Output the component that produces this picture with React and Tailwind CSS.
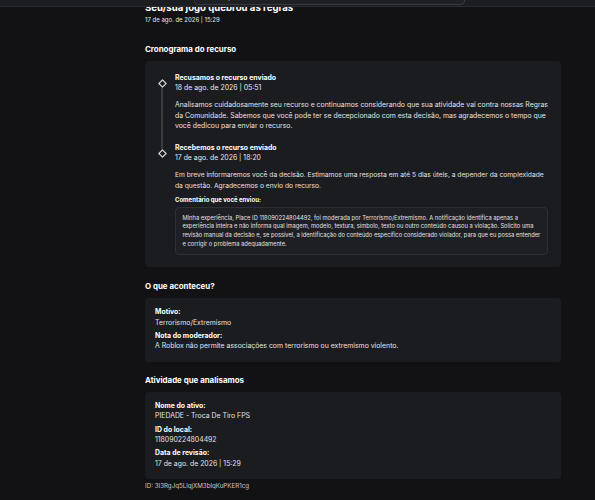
import React from "react";

const Diamond = () => (
  <svg width="9" height="9" viewBox="0 0 9 9" className="shrink-0">
    <path d="M4.5 0.9 L8.1 4.5 L4.5 8.1 L0.9 4.5 Z" fill="none" stroke="#d6d6d8" strokeWidth="1.2" strokeLinejoin="round" />
  </svg>
);

const TimelineItem = ({ title, date, first, last, children }) => (
  <div className="flex flex-col">
    <div className="flex gap-[8px]">
      <div className="flex w-[10px] flex-col items-center">
        <div className={`w-[1.5px] flex-1 ${first ? "" : "bg-[#3b3c41]"}`} />
        <Diamond />
        <div className={`w-[1.5px] flex-1 ${last ? "" : "bg-[#3b3c41]"}`} />
      </div>
      <div className="flex flex-col">
        <div className="text-[6.9px] font-bold leading-[10.5px] text-white">{title}</div>
        <div className="text-[6.9px] leading-[10.5px] text-[#e8e8ea]">{date}</div>
      </div>
    </div>
    <div className="flex gap-[8px]">
      <div className="flex w-[10px] justify-center">
        <div className={`w-[1.5px] ${last ? "" : "bg-[#3b3c41]"}`} />
      </div>
      <div className={`flex-1 pt-[6.5px] ${last ? "" : "pb-[11px]"}`}>{children}</div>
    </div>
  </div>
);

const Field = ({ label, value }) => (
  <div className="flex flex-col">
    <div className="text-[6.9px] font-bold leading-[10.5px] text-white">{label}</div>
    <div className="text-[6.9px] leading-[10.5px] text-[#e2e2e4]">{value}</div>
  </div>
);

export default function App() {
  return (
    <div className="relative h-[500px] w-[595px] overflow-hidden bg-[#121215] font-['Inter',sans-serif] antialiased">
      <header className="absolute left-0 right-0 top-0 z-10 h-[7px] overflow-hidden border-b border-[#2a2b30] bg-[#1c1d21]">
        <div className="-mt-[8px] flex items-start text-[8px] font-semibold leading-[10px] text-[#e6e6e8]">
          <span className="ml-[45px]">Mercado</span>
          <span className="ml-[62px]">Criar</span>
          <div className="ml-[34px] -mt-[5px] flex h-[18px] w-[271px] items-end gap-[4px] rounded-[4px] border border-[#3a3b40] bg-[#1f2024] px-[6px] pb-[3px] font-normal">
            <span className="text-[8px]">⚲</span>
            <span>Pesquisar</span>
          </div>
        </div>
      </header>

      <main className="ml-[145px] mr-[34px] flex flex-col pt-[1px]">
        <h1 className="text-[9.6px] font-bold leading-[14px] text-white">Seu/sua jogo quebrou as regras</h1>
        <div className="text-[6px] leading-[10px] text-[#e8e8ea]">17 de ago. de 2026 | 15:29</div>

        <h2 className="mt-[18px] text-[7.9px] font-bold leading-[12px] text-white">Cronograma do recurso</h2>
        <section className="mt-[6px] rounded-[4px] bg-[#1b1c20] pb-[12px] pl-[12px] pr-[13px] pt-[11.5px]">
          <TimelineItem first title="Recusamos o recurso enviado" date="18 de ago. de 2026 | 05:51">
            <p className="text-[6.9px] leading-[10.5px] text-[#e2e2e4]">
              Analisamos cuidadosamente seu recurso e continuamos considerando que sua atividade vai contra nossas Regras da Comunidade. Sabemos que você pode ter se decepcionado com esta decisão, mas agradecemos o tempo que você dedicou para enviar o recurso.
            </p>
          </TimelineItem>
          <TimelineItem last title="Recebemos o recurso enviado" date="17 de ago. de 2026 | 18:20">
            <p className="text-[6.7px] leading-[10.5px] text-[#e2e2e4]">
              Em breve informaremos você da decisão. Estimamos uma resposta em até 5 dias úteis, a depender da complexidade da questão. Agradecemos o envio do recurso.
            </p>
            <div className="mt-[3.75px] text-[6px] font-bold leading-[9px] text-white">Comentário que você enviou:</div>
            <div className="mt-[3px] rounded-[4px] border border-[#2e2f34] bg-[#1e1f23] px-[6.5px] pb-[6px] pt-[6px] text-[5.75px] leading-[8.6px] text-[#e2e2e4]">
              Minha experiência, Place ID 118090224804492, foi moderada por Terrorismo/Extremismo. A notificação identifica apenas a experiência inteira e não informa qual imagem, modelo, textura, símbolo, texto ou outro conteúdo causou a violação. Solicito uma revisão manual da decisão e, se possível, a identificação do conteúdo específico considerado violador, para que eu possa entender e corrigir o problema adequadamente.
            </div>
          </TimelineItem>
        </section>

        <h2 className="mt-[13px] text-[7.9px] font-bold leading-[12px] text-white">O que aconteceu?</h2>
        <section className="mt-[6px] flex flex-col gap-[2.75px] rounded-[4px] bg-[#1b1c20] px-[10px] pb-[10px] pt-[9px]">
          <Field label="Motivo:" value="Terrorismo/Extremismo" />
          <Field label="Nota do moderador:" value="A Roblox não permite associações com terrorismo ou extremismo violento." />
        </section>

        <h2 className="mt-[12px] text-[7.9px] font-bold leading-[12px] text-white">Atividade que analisamos</h2>
        <section className="mt-[6px] flex flex-col gap-[2.75px] rounded-[4px] bg-[#1b1c20] px-[10px] pb-[10px] pt-[9px]">
          <Field label="Nome do ativo:" value="PIEDADE - Troca De Tiro FPS" />
          <Field label="ID do local:" value="118090224804492" />
          <Field label="Data de revisão:" value="17 de ago. de 2026 | 15:29" />
        </section>

        <div className="mt-[3px] text-[6.2px] leading-[8px] text-[#c8c8cc]">ID: 3I3RgJq5LlqjXM3blqKuPKER1cg</div>
      </main>
    </div>
  );
}
